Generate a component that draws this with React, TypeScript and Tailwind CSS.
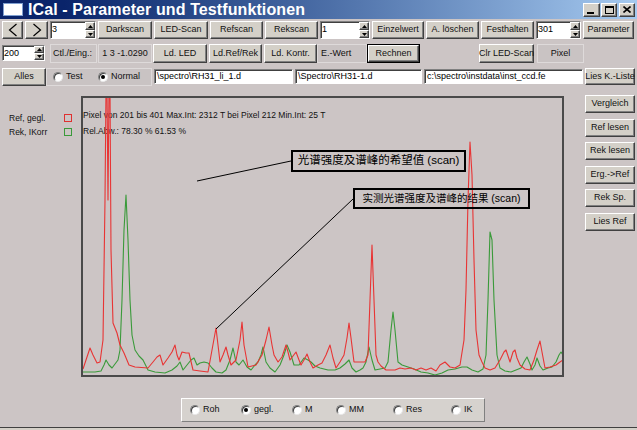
import React from 'react';

const raised =
  'bg-[#d4d0c8] border border-t-white border-l-white border-r-[#404040] border-b-[#404040] shadow-[inset_-1px_-1px_0_#808080]';
const sunken =
  'bg-white border border-t-[#808080] border-l-[#808080] border-r-white border-b-white shadow-[inset_1px_1px_0_#404040]';
const flat = 'bg-[#c9c3c3] border border-[#dedada]';

const RED = [
  [83, 369], [86, 360], [90, 348], [93, 355], [97, 363], [100, 362], [103, 340], [105, 200], [106, 90], [107, 90],
  [108, 200], [109, 90], [110, 90], [111, 250], [113, 323], [117, 333], [120, 345], [124, 353], [129, 365], [135, 367],
  [148, 368], [153, 362], [157, 357], [160, 355], [163, 365], [168, 358], [172, 352], [175, 345], [177, 355], [179, 360],
  [182, 352], [186, 353], [189, 353], [193, 370], [200, 371], [208, 372], [212, 350], [216, 328], [218, 345], [220, 362],
  [223, 355], [226, 347], [228, 355], [231, 365], [236, 360], [240, 340], [242, 322], [244, 345], [248, 367], [252, 366],
  [256, 365], [262, 355], [266, 340], [269, 327], [272, 345], [274, 355], [278, 362], [282, 357], [286, 345], [288, 352],
  [290, 360], [293, 356], [296, 352], [299, 360], [301, 365], [304, 360], [307, 354], [310, 362], [313, 368], [318, 365],
  [322, 363], [326, 355], [330, 345], [333, 358], [336, 368], [340, 362], [344, 355], [347, 338], [349, 323], [351, 338],
  [354, 362], [360, 362], [365, 362], [368, 355], [370, 300], [372, 245], [374, 300], [376, 355], [378, 362], [381, 366],
  [386, 370], [395, 370], [400, 368], [405, 369], [411, 368], [416, 370], [421, 368], [426, 370], [431, 368], [436, 371],
  [440, 365], [445, 362], [450, 367], [455, 368], [460, 365], [464, 340], [466, 290], [468, 200], [470, 142], [472, 175],
  [474, 260], [476, 330], [479, 355], [482, 362], [485, 368], [490, 370], [495, 368], [500, 360], [504, 352], [506, 350],
  [508, 356], [510, 362], [513, 352], [515, 350], [517, 358], [520, 365], [525, 369], [530, 370], [534, 360], [537, 350],
  [540, 341], [542, 352], [545, 368], [550, 367], [556, 365], [560, 362], [563, 360],
];

const GREEN = [
  [83, 372], [95, 372], [101, 371], [104, 365], [106, 360], [109, 365], [112, 368], [115, 364], [118, 360], [120, 350],
  [122, 300], [124, 230], [126, 195], [128, 240], [130, 300], [132, 335], [135, 350], [139, 356], [143, 360], [148, 370],
  [155, 372], [165, 373], [172, 370], [177, 366], [180, 362], [183, 370], [187, 365], [191, 360], [194, 358], [197, 365],
  [200, 363], [204, 362], [208, 363], [212, 368], [216, 372], [222, 373], [226, 370], [230, 360], [233, 348], [236, 362],
  [239, 365], [243, 360], [247, 367], [251, 370], [255, 365], [258, 362], [261, 355], [263, 347], [266, 362], [270, 368],
  [275, 372], [280, 365], [284, 355], [287, 345], [290, 352], [294, 365], [299, 365], [304, 358], [308, 360], [311, 362],
  [315, 366], [320, 368], [328, 370], [335, 370], [340, 368], [345, 364], [349, 360], [352, 368], [356, 372], [360, 370],
  [363, 368], [366, 362], [369, 347], [372, 360], [375, 370], [380, 369], [385, 368], [388, 362], [391, 330], [393, 312],
  [395, 330], [398, 362], [402, 365], [408, 367], [414, 369], [421, 372], [428, 373], [435, 375], [442, 373], [448, 370],
  [455, 369], [462, 367], [467, 367], [472, 370], [478, 372], [483, 369], [486, 355], [488, 300], [490, 232], [492, 240],
  [494, 300], [497, 355], [500, 368], [505, 371], [511, 372], [516, 370], [521, 368], [524, 362], [527, 357], [530, 364],
  [532, 370], [535, 365], [537, 358], [540, 366], [543, 370], [548, 368], [552, 367], [556, 362], [559, 355], [561, 352],
  [563, 355],
];

function Btn({ className = '', children }: { className?: string; children: React.ReactNode }) {
  return (
    <div className={`${raised} flex items-center justify-center text-[9px] text-[#111] whitespace-nowrap ${className}`}>
      {children}
    </div>
  );
}

function Panel({ className = '', children }: { className?: string; children: React.ReactNode }) {
  return <div className={`${flat} flex items-center text-[9px] text-[#111] whitespace-nowrap ${className}`}>{children}</div>;
}

function Field({ className = '', value }: { className?: string; value: string }) {
  return (
    <div className={`${sunken} flex items-center pl-[2px] text-[9px] text-black whitespace-nowrap overflow-hidden ${className}`}>
      {value}
    </div>
  );
}

function Spin({ className = '', value }: { className?: string; value: string }) {
  return (
    <div className={`${sunken} flex items-stretch ${className}`}>
      <div className="flex-1 flex items-start pl-[1px] pt-[1px] text-[9px] text-black">{value}</div>
      <div className="w-[10px] flex flex-col">
        <div className={`${raised} flex-1 flex items-center justify-center`}>
          <svg width="5" height="3" viewBox="0 0 5 3"><path d="M2.5 0L5 3H0z" fill="#000" /></svg>
        </div>
        <div className={`${raised} flex-1 flex items-center justify-center`}>
          <svg width="5" height="3" viewBox="0 0 5 3"><path d="M0 0h5L2.5 3z" fill="#000" /></svg>
        </div>
      </div>
    </div>
  );
}

function Radio({ checked, label, className = '' }: { checked?: boolean; label: string; className?: string }) {
  return (
    <div className={`flex items-center gap-[3px] text-[9px] text-[#111] ${className}`}>
      <div className="w-[10px] h-[10px] rounded-full bg-white border border-t-[#808080] border-l-[#808080] border-r-[#e8e8e8] border-b-[#e8e8e8] shadow-[inset_1px_1px_0_#404040] flex items-center justify-center">
        {checked && <div className="w-[4px] h-[4px] rounded-full bg-black" />}
      </div>
      <span>{label}</span>
    </div>
  );
}

function pts(a: number[][]) {
  return a.map(([x, y]) => `${x},${y}`).join(' ');
}

export default function App() {
  return (
    <div className="w-[637px] h-[430px] bg-[#ccc5c5] overflow-hidden flex flex-col font-['Liberation_Sans','Noto_Sans_CJK_SC',Arial,sans-serif]">
      {/* Title bar */}
      <div className="h-[19px] flex items-center bg-linear-to-r from-[#0a246a] from-10% to-[#a6caf0]">
        <div className="ml-[3px] w-[20px] h-[13px] bg-white border border-[#7f9fd0]" />
        <div className="ml-[5px] text-[16px] font-bold text-white leading-none tracking-[0.1px]">
          ICal - Parameter und Testfunktionen
        </div>
        <div className="ml-auto mr-[2px] flex gap-[1px]">
          <div className={`${raised} w-[17px] h-[14px] flex items-end justify-start pl-[3px] pb-[2px]`}>
            <div className="w-[7px] h-[2px] bg-black" />
          </div>
          <div className={`${raised} w-[16px] h-[14px] flex items-center justify-center`}>
            <div className="w-[9px] h-[8px] border border-black border-t-2" />
          </div>
          <div className={`${raised} w-[16px] h-[14px] flex items-center justify-center ml-[1px]`}>
            <svg width="8" height="7" viewBox="0 0 8 7">
              <path d="M0.5 0.5L7.5 6.5M7.5 0.5L0.5 6.5" stroke="#000" strokeWidth="1.6" />
            </svg>
          </div>
        </div>
      </div>

      {/* Row 1 */}
      <div className="flex gap-[2px] pl-[2px] mt-[2px] h-[18px]">
        <Btn className="w-[21px]">
          <svg width="10" height="14" viewBox="0 0 10 14"><path d="M8.5 1L1.5 7L8.5 13" fill="none" stroke="#000" strokeWidth="1.2" /></svg>
        </Btn>
        <Btn className="w-[23px]">
          <svg width="10" height="14" viewBox="0 0 10 14"><path d="M1.5 1L8.5 7L1.5 13" fill="none" stroke="#000" strokeWidth="1.2" /></svg>
        </Btn>
        <Spin className="w-[46px]" value="3" />
        <Btn className="w-[54px]">Darkscan</Btn>
        <Btn className="w-[54px]">LED-Scan</Btn>
        <Btn className="w-[53px]">Refscan</Btn>
        <Btn className="w-[53px]">Rekscan</Btn>
        <Spin className="w-[50px]" value="1" />
        <Btn className="w-[52px]">Einzelwert</Btn>
        <Btn className="w-[53px]">A. löschen</Btn>
        <Btn className="w-[53px]">Festhalten</Btn>
        <Spin className="w-[45px]" value="301" />
        <Btn className="w-[51px]">Parameter</Btn>
      </div>

      {/* Row 2 */}
      <div className="flex items-start pl-[2px] mt-[5px] h-[19px]">
        <Spin className="w-[43px] h-[16px] mt-[1px]" value="200" />
        <Panel className="w-[47px] h-[19px] ml-[5px] pl-[2px]">Ctl./Eing.:</Panel>
        <Panel className="w-[54px] h-[19px] ml-[1px] justify-center">1 3 -1.0290</Panel>
        <Btn className="w-[54px] h-[19px] ml-[1px]">Ld. LED</Btn>
        <Btn className="w-[53px] h-[19px] ml-[2px]">Ld.Ref/Rek</Btn>
        <Btn className="w-[53px] h-[19px] ml-[2px]">Ld. Kontr.</Btn>
        <Panel className="w-[50px] h-[19px] pl-[3px]">E.-Wert</Panel>
        <div className="w-[53px] h-[19px] border border-black">
          <Btn className="w-full h-full text-[9.5px]">Rechnen</Btn>
        </div>
        <Btn className="w-[55px] h-[19px] ml-[59px] text-[8.5px]">Clr LED-Scan</Btn>
        <Panel className="w-[47px] h-[19px] ml-[3px] justify-center">Pixel</Panel>
      </div>

      {/* Row 3 */}
      <div className="flex items-start pl-[2px] mt-[5px] h-[18px]">
        <Btn className="w-[44px] h-[18px]">Alles</Btn>
        <Panel className="w-[106px] h-[18px] pl-[6px]">
          <Radio className="w-[45px]" label="Test" />
          <Radio checked label="Normal" />
        </Panel>
        <Field className="w-[139px] h-[15px] ml-[2px] mt-[1px]" value="\spectro\RH31_li_1.d" />
        <Field className="w-[127px] h-[15px] ml-[2px] mt-[1px]" value="\Spectro\RH31-1.d" />
        <Field className="w-[159px] h-[15px] ml-[2px] mt-[1px]" value="c:\spectro\instdata\inst_ccd.fe" />
        <Btn className="w-[50px] h-[17px] ml-[2px] text-[8.5px]">Lies K.-Liste</Btn>
      </div>

      {/* Main */}
      <div className="flex items-start mt-[9px]">
        <div className="w-[81px] pt-[16px] flex flex-col text-[8.5px] text-[#111]">
          <div className="h-[14px] flex items-center">
            <span className="w-[64px] pl-[9px]">Ref, gegl.</span>
            <div className="w-[8px] h-[8px] border border-[#e03030]" />
          </div>
          <div className="h-[14px] flex items-center">
            <span className="w-[64px] pl-[9px]">Rek, IKorr</span>
            <div className="w-[8px] h-[8px] border border-[#3a9a3a]" />
          </div>
        </div>

        <div className="relative w-[483px] h-[281px] mt-[1px] border-2 border-[#4a4a4a] overflow-hidden">
          <div className="absolute left-0 top-[12px] text-[8.5px] leading-[10px] text-[#111] whitespace-nowrap">
            Pixel von 201 bis 401 Max.Int: 2312 T bei Pixel 212 Min.Int: 25 T
          </div>
          <div className="absolute left-0 top-[28px] text-[8.5px] leading-[10px] text-[#111] whitespace-nowrap">
            Rel.Abw.: 78.30 % 61.53 %
          </div>
          <svg className="absolute inset-0 w-full h-full" viewBox="83 98 479 277" preserveAspectRatio="none">
            <polyline points={pts(GREEN)} fill="none" stroke="#3a9a3a" strokeWidth="1.1" strokeLinejoin="round" />
            <polyline points={pts(RED)} fill="none" stroke="#e83434" strokeWidth="1.1" strokeLinejoin="round" />
            <line x1="197" y1="181" x2="291" y2="161" stroke="#000" strokeWidth="1" />
            <line x1="216" y1="329" x2="353" y2="199" stroke="#000" strokeWidth="1" />
          </svg>
          <div className="absolute left-[208px] top-[52px] w-[175px] h-[22px] border-2 border-black flex items-center justify-center text-[11.5px] text-black whitespace-nowrap">
            光谱强度及谱峰的希望值 (scan)
          </div>
          <div className="absolute left-[270px] top-[90px] w-[177px] h-[21px] border-2 border-black flex items-center justify-center text-[10.5px] text-black whitespace-nowrap">
            实测光谱强度及谱峰的结果 (scan)
          </div>
        </div>

        <div className="ml-[21px] w-[50px] flex flex-col gap-[5.5px]">
          <Btn className="h-[18px]">Vergleich</Btn>
          <Btn className="h-[18px]">Ref lesen</Btn>
          <Btn className="h-[18px]">Rek lesen</Btn>
          <Btn className="h-[18px]">Erg.-&gt;Ref</Btn>
          <Btn className="h-[18px]">Rek Sp.</Btn>
          <Btn className="h-[18px]">Lies Ref</Btn>
        </div>
      </div>

      {/* Bottom radio group */}
      <div className={`${raised} shadow-none border-r-[#808080] border-b-[#808080] bg-[#d6d2ce] ml-[181px] mt-[21px] w-[304px] h-[24px] flex items-center pl-[8px]`}>
        <Radio className="w-[51px]" label="Roh" />
        <Radio className="w-[51px]" checked label="gegl." />
        <Radio className="w-[44px]" label="M" />
        <Radio className="w-[57px]" label="MM" />
        <Radio className="w-[58px]" label="Res" />
        <Radio label="IK" />
      </div>

      <div className="mt-[5px] h-[1px] bg-[#404040]" />
      <div className="flex-1 bg-[#d4d0c8]" />
    </div>
  );
}
